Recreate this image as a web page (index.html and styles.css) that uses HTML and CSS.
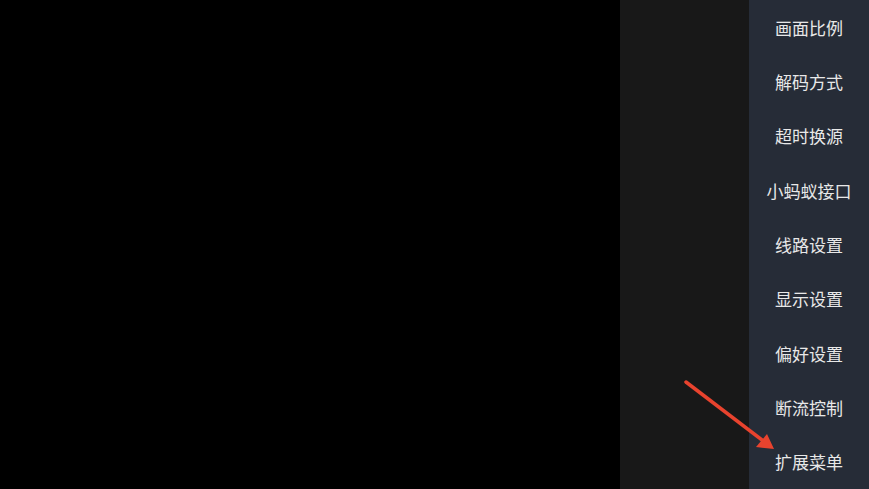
FILE: index.html
```html
<!DOCTYPE html>
<html lang="zh-CN">
<head>
<meta charset="utf-8">
<link rel="stylesheet" href="styles.css">
</head>
<body>
<div class="screen">
  <div class="video"></div>
  <div class="shade"></div>
  <ul class="menu">
    <li>画面比例</li>
    <li>解码方式</li>
    <li>超时换源</li>
    <li>小蚂蚁接口</li>
    <li>线路设置</li>
    <li>显示设置</li>
    <li>偏好设置</li>
    <li>断流控制</li>
    <li>扩展菜单</li>
  </ul>
  <svg class="arrow" width="869" height="489" viewBox="0 0 869 489">
    <line x1="686" y1="382" x2="766" y2="443" stroke="#e8432e" stroke-width="3.5" stroke-linecap="round"/>
    <polygon points="774,449 767,434 756,447" fill="#e8432e"/>
  </svg>
</div>
</body>
</html>
```
FILE: styles.css
```css
html, body {
  margin: 0;
  padding: 0;
  background: #000;
}
.screen {
  position: relative;
  width: 869px;
  height: 489px;
  display: flex;
  overflow: hidden;
}
.video {
  width: 620px;
  background: #000;
}
.shade {
  width: 129px;
  background: #181818;
}
.menu {
  width: 120px;
  margin: 0;
  padding: 0;
  list-style: none;
  background: #262c37;
  display: flex;
  flex-direction: column;
}
.menu li {
  flex: 1;
  display: flex;
  align-items: center;
  justify-content: center;
  color: #e8e8e8;
  font-family: "Noto Sans CJK SC", "Noto Sans", sans-serif;
  font-size: 17px;
  white-space: nowrap;
}
.arrow {
  position: absolute;
  left: 0;
  top: 0;
  pointer-events: none;
}
```
